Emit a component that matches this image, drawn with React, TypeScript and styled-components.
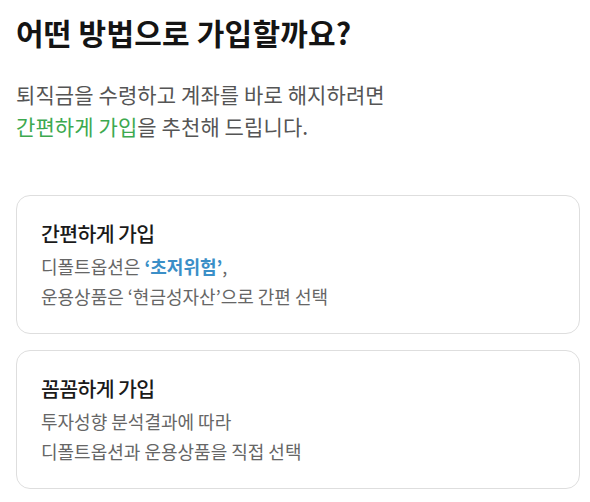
import React from "react";
import styled, { createGlobalStyle } from "styled-components";

const GlobalStyle = createGlobalStyle`
  body {
    margin: 0;
    background: #ffffff;
    font-family: "Noto Sans CJK KR", "Noto Sans", sans-serif;
  }
`;

const Page = styled.div`
  padding: 10px 10px 0 16px;
`;

const Title = styled.h1`
  margin: 0;
  font-size: 30px;
  font-weight: 700;
  line-height: 44px;
  letter-spacing: 0.2px;
  color: #141414;
`;

const Desc = styled.p`
  margin: 24px 0 0;
  font-size: 21px;
  font-weight: 400;
  line-height: 32px;
  letter-spacing: 0.1px;
  color: #555555;
`;

const Green = styled.span`
  color: #3da94f;
`;

const CardList = styled.div`
  margin-top: 53px;
  display: flex;
  flex-direction: column;
  gap: 16px;
`;

const Card = styled.div`
  height: 139px;
  box-sizing: border-box;
  border: 1.5px solid #dedede;
  border-radius: 14px;
  padding: 22px 24px;
`;

const CardTitle = styled.div`
  font-size: 20.5px;
  font-weight: 500;
  line-height: 30px;
  letter-spacing: -0.6px;
  color: #1a1a1a;
`;

const CardText = styled.div`
  margin-top: 3px;
  font-size: 18px;
  line-height: 30px;
  letter-spacing: 0;
  color: #666666;
`;

const Strong = styled.span`
  font-weight: 700;
  color: #3b8fc7;
`;

type Option = {
  id: string;
  title: string;
  lines: React.ReactNode[];
};

const options: Option[] = [
  {
    id: "simple",
    title: "간편하게 가입",
    lines: [
      <>
        디폴트옵션은 <Strong>‘초저위험’</Strong>,
      </>,
      <>운용상품은 ‘현금성자산’으로 간편 선택</>,
    ],
  },
  {
    id: "detail",
    title: "꼼꼼하게 가입",
    lines: [<>투자성향 분석결과에 따라</>, <>디폴트옵션과 운용상품을 직접 선택</>],
  },
];

const App: React.FC = () => {
  return (
    <>
      <GlobalStyle />
      <Page>
        {/* 상단 안내 */}
        <Title>어떤 방법으로 가입할까요?</Title>
        <Desc>
          퇴직금을 수령하고 계좌를 바로 해지하려면
          <br />
          <Green>간편하게 가입</Green>을 추천해 드립니다.
        </Desc>
        {/* 가입 방법 카드 */}
        <CardList>
          {options.map((item) => (
            <Card key={item.id}>
              <CardTitle>{item.title}</CardTitle>
              <CardText>
                {item.lines.map((line, i) => (
                  <div key={i}>{line}</div>
                ))}
              </CardText>
            </Card>
          ))}
        </CardList>
      </Page>
    </>
  );
};

export default App;
